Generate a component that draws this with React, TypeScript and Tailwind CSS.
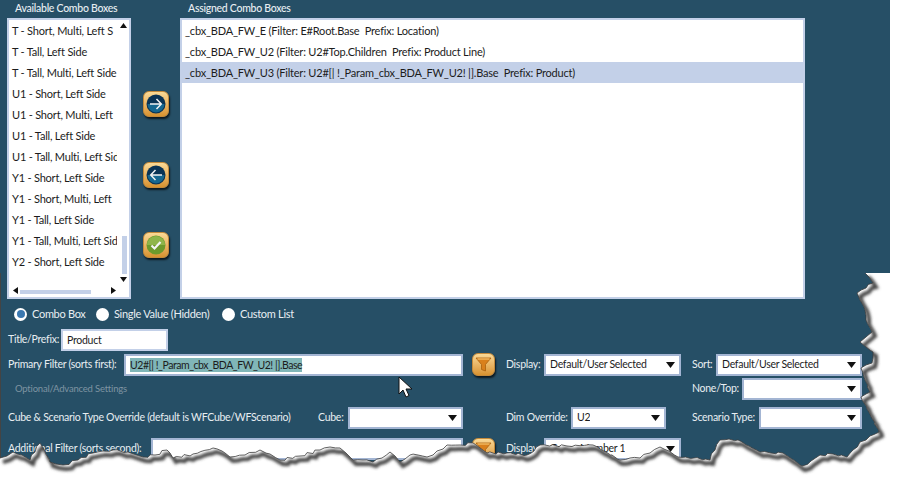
import React from "react";

const availableItems = [
  "T - Short, Multi, Left S",
  "T - Tall, Left Side",
  "T - Tall, Multi, Left Side",
  "U1 - Short, Left Side",
  "U1 - Short, Multi, Left",
  "U1 - Tall, Left Side",
  "U1 - Tall, Multi, Left Side",
  "Y1 - Short, Left Side",
  "Y1 - Short, Multi, Left",
  "Y1 - Tall, Left Side",
  "Y1 - Tall, Multi, Left Side",
  "Y2 - Short, Left Side",
];

const assignedItems = [
  "_cbx_BDA_FW_E (Filter: E#Root.Base  Prefix: Location)",
  "_cbx_BDA_FW_U2 (Filter: U2#Top.Children  Prefix: Product Line)",
  "_cbx_BDA_FW_U3 (Filter: U2#[| !_Param_cbx_BDA_FW_U2! |].Base  Prefix: Product)",
];

// torn paper edge, traced from the right side round to the bottom left
const tornTrace = "865,273 869,277 873,283 866,288 857,293 860,300 865,310 866,320 872,332 866,337 860,342 866,347 873,352 873,358 872,363 866,365 861,368 865,380 870,392 866,394 861,397 870,414 879,432 870,436 860,442 853,450 847,457 833,454 820,455 811,461 802,466 792,459 783,453 771,453 760,452 749,446 738,440 729,439 720,440 715,450 710,460 694,458 678,457 669,451 660,447 650,453 640,458 630,458 620,460 606,452 593,445 567,446 540,445 534,451 527,455 507,453 487,453 480,448 473,443 460,445 447,445 437,451 427,457 418,455 410,455 405,459 400,462 395,456 390,452 382,458 373,462 363,460 353,460 346,453 340,448 330,447 320,450 300,456 280,460 270,454 260,450 245,455 230,457 222,451 213,448 193,454 173,458 170,453 167,450 155,455 143,457 128,452 113,450 103,451 93,453 78,460 63,465 56,464 50,462 45,451 40,443 35,452 30,460 22,455 13,452 7,456 0,458";

// break the long segments up with a small fixed wobble so the edge reads as rough paper
function roughen(trace: string) {
  const pts = trace.split(" ").map((p) => p.split(",").map(Number));
  const out: string[] = [];
  pts.forEach(([x, y], i) => {
    out.push(`${x},${y}`);
    const next = pts[i + 1];
    if (!next) return;
    const steps = Math.floor(Math.hypot(next[0] - x, next[1] - y) / 4);
    for (let s = 1; s < steps; s++) {
      const t = s / steps;
      const w = Math.sin(i * 7.3 + s * 2.9) * 1.1;
      out.push(`${(x + (next[0] - x) * t + w).toFixed(1)},${(y + (next[1] - y) * t + w).toFixed(1)}`);
    }
  });
  return out;
}

const tornList = roughen(tornTrace);
const tornPoints = tornList.join(" ");
const outsidePoints = `890,273 904,273 904,487 0,487 ${[...tornList].reverse().join(" ")}`;

function Select({ value, className }: { value?: string; className: string }) {
  return (
    <div
      className={`h-[22px] bg-white border-2 border-[#a3b5d3] flex items-center justify-between pl-[4px] pr-[4px] text-[#1c1c1c] ${className}`}
    >
      <span className="overflow-hidden">{value}</span>
      <svg width="9" height="6" viewBox="0 0 9 6" className="shrink-0">
        <path d="M0 0h9L4.500 6z" fill="#111" />
      </svg>
    </div>
  );
}

function OrangeButton({ children, className }: { children: React.ReactNode; className: string }) {
  return (
    <div
      className={`rounded-[6px] bg-gradient-to-b from-[#fad995] to-[#d8932f] border border-[#c58a3a] shadow-[1px_2px_2px_rgba(0,0,0,0.7)] flex items-center justify-center ${className}`}
    >
      {children}
    </div>
  );
}

function ArrowButton({ dir, className }: { dir: "right" | "left"; className: string }) {
  return (
    <OrangeButton className={className}>
      <svg width="20" height="20" viewBox="0 0 20 20">
        <circle cx="10" cy="10" r="9.500" fill="#0a3354" />
        <path d="M1.500 10a8.500 8.500 0 0 0 17 0z" fill="#15668f" />
        {dir === "right" ? (
          <path d="M4 10h11M10.500 5l4.800 5-4.800 5" fill="none" stroke="#f2f2f2" strokeWidth="1.500" />
        ) : (
          <path d="M16 10H5M9.500 5L4.700 10l4.800 5" fill="none" stroke="#f2f2f2" strokeWidth="1.500" />
        )}
      </svg>
    </OrangeButton>
  );
}

function FilterButton() {
  return (
    <OrangeButton className="w-[23px] h-[23px] ml-[9px]">
      <svg width="17" height="17" viewBox="0 0 17 17">
        <path d="M1 2h15l-5.500 6.500V15l-4-1.500V8.500z" fill="#d9801c" stroke="#a8610f" strokeWidth="0.800" />
        <path d="M2.500 3h12" stroke="#f6c56f" strokeWidth="1.200" />
      </svg>
    </OrangeButton>
  );
}

function Radio({ label, checked, className }: { label: string; checked?: boolean; className?: string }) {
  return (
    <div className={`flex items-center gap-[5px] ${className ?? ""}`}>
      <div className="w-[13px] h-[13px] shrink-0 rounded-full bg-white flex items-center justify-center">
        {checked && <div className="w-[8px] h-[8px] rounded-full bg-[#3a78b0]" />}
      </div>
      <span>{label}</span>
    </div>
  );
}

export default function App() {
  return (
    <div className="relative w-[904px] h-[487px] bg-white overflow-hidden whitespace-nowrap font-['Lato',sans-serif] text-[10.5px] tracking-[-0.27px] text-[#e8eef2]">
      <div className="w-[890px] h-[487px] bg-[#264f66]">
        {/* list section */}
        <div className="flex pl-[7px] h-[299px]">
          <div className="w-[124px] shrink-0">
            <div className="h-[18px] pl-[8px] leading-[17px] font-medium">Available Combo Boxes</div>
            <div className="relative h-[281px] bg-white border-2 border-[#c3d0e8] overflow-hidden">
              {availableItems.map((item) => (
                <div key={item} className="h-[21px] w-[108px] pl-[3px] leading-[21px] text-[#1c1c1c] overflow-hidden text-[11px] tracking-[-0.2px]">
                  {item}
                </div>
              ))}
              {/* scrollbars */}
              <div className="absolute right-[2px] top-[216px] w-[5px] h-[38px] bg-[#c3d0e8]" />
              <div className="absolute left-[11px] bottom-[3px] w-[71px] h-[4px] bg-[#c3d0e8]" />
              <svg className="absolute right-[2px] top-[3px]" width="7" height="5" viewBox="0 0 7 5"><path d="M0 5h7L3.500 0z" fill="#111" /></svg>
              <svg className="absolute right-[2px] top-[257px]" width="7" height="5" viewBox="0 0 7 5"><path d="M0 0h7L3.500 5z" fill="#111" /></svg>
              <svg className="absolute left-[4px] bottom-[3px]" width="5" height="7" viewBox="0 0 5 7"><path d="M5 0v7L0 3.500z" fill="#111" /></svg>
              <svg className="absolute left-[102px] bottom-[3px]" width="5" height="7" viewBox="0 0 5 7"><path d="M0 0v7L5 3.500z" fill="#111" /></svg>
            </div>
          </div>
          <div className="w-[49px] shrink-0 flex flex-col items-center pl-[1px] pt-[91px]">
            <ArrowButton dir="right" className="w-[26px] h-[26px]" />
            <ArrowButton dir="left" className="w-[26px] h-[26px] mt-[45px]" />
            <OrangeButton className="w-[26px] h-[26px] mt-[44px]">
              <svg width="20" height="20" viewBox="0 0 20 20">
                <circle cx="10" cy="10" r="9.500" fill="#6d9a2c" />
                <path d="M1 10a9 9 0 0 1 18 0z" fill="#8fb54a" />
                <path d="M5.500 10.500l3 3 6-6.500" fill="none" stroke="#f4f4f4" strokeWidth="2.200" />
              </svg>
            </OrangeButton>
          </div>
          <div className="w-[625px] shrink-0">
            <div className="h-[18px] pl-[8px] leading-[17px] font-medium">Assigned Combo Boxes</div>
            <div className="h-[281px] bg-white border-2 border-[#c3d0e8] text-[#1c1c1c] text-[11px] tracking-[-0.2px]">
              {assignedItems.map((item, i) => (
                <div key={item} className={`h-[21px] pl-[3px] leading-[21px] whitespace-pre ${i === 2 ? "bg-[#c3d0e8]" : ""}`}>
                  {item}
                </div>
              ))}
            </div>
          </div>
        </div>

        {/* radio row */}
        <div className="flex items-center h-[30px] pl-[14px] text-[11px] tracking-[-0.3px]">
          <Radio label="Combo Box" checked className="w-[82px]" />
          <Radio label="Single Value (Hidden)" className="w-[126px]" />
          <Radio label="Custom List" />
        </div>

        {/* title row */}
        <div className="flex items-center h-[22px] pl-[8px]">
          <span className="w-[53px]">Title/Prefix:</span>
          <div className="w-[107px] h-[22px] bg-white border-2 border-[#c3d0e8] pl-[4px] leading-[19px] text-[#1c1c1c]">Product</div>
        </div>

        {/* primary filter row */}
        <div className="flex items-center h-[23px] mt-[2px] pl-[8px]">
          <span className="w-[116px]">Primary Filter (sorts first):</span>
          <div className="w-[339px] h-[22px] bg-white border-2 border-[#a3b5d3] pl-[4px] pt-[2px] text-[#1c1c1c] leading-[14px]">
            <span className="inline-block h-[14px] bg-[#80b6b8] whitespace-pre tracking-[-0.45px]">U2#[| !_Param_cbx_BDA_FW_U2! |].Base</span>
          </div>
          <FilterButton />
          <span className="w-[38px] ml-[11px]">Display:</span>
          <Select value="Default/User Selected" className="w-[137px]" />
          <span className="w-[24px] ml-[11px]">Sort:</span>
          <Select value="Default/User Selected" className="w-[146px]" />
        </div>

        {/* optional settings row */}
        <div className="flex items-center h-[22px] mt-[2px]">
          <span className="w-[692px] pl-[15px] text-[#7e94a2] text-[9.5px] tracking-[-0.2px]">Optional/Advanced Settings</span>
          <span className="w-[50px]">None/Top:</span>
          <Select className="w-[120px]" />
        </div>

        {/* override row */}
        <div className="flex items-center h-[22px] mt-[7px] pl-[8px]">
          <span className="w-[310px]">Cube &amp; Scenario Type Override (default is WFCube/WFScenario)</span>
          <span className="w-[30px]">Cube:</span>
          <Select className="w-[115px]" />
          <span className="w-[65px] ml-[43px]">Dim Override:</span>
          <Select value="U2" className="w-[95px]" />
          <span className="w-[67px] ml-[26px]">Scenario Type:</span>
          <Select className="w-[103px]" />
        </div>

        {/* additional filter row, mostly torn away */}
        <div className="flex items-center h-[22px] mt-[9px] pl-[8px]">
          <span className="w-[143px]">Additional Filter (sorts second):</span>
          <div className="w-[312px] h-[22px] bg-white border-2 border-[#a3b5d3]" />
          <FilterButton />
          <span className="w-[38px] ml-[11px]">Display:</span>
          <Select value="Group Member 1" className="w-[137px]" />
        </div>
      </div>

      {/* mouse pointer */}
      <svg className="absolute left-[398px] top-[376px]" width="16" height="22" viewBox="0 0 16 22">
        <path d="M1 1v17l4-4 3 7 3-1.500-3-6.500h6z" fill="#fff" stroke="#111" strokeWidth="1" />
      </svg>

      {/* torn edge */}
      <svg className="absolute inset-0" width="904" height="487" viewBox="0 0 904 487">
        <defs>
          <filter id="tornBlur" x="-5%" y="-5%" width="110%" height="110%">
            <feGaussianBlur stdDeviation="1.800" />
          </filter>
          <clipPath id="outside">
            <polygon points={outsidePoints} />
          </clipPath>
        </defs>
        <polygon points={outsidePoints} fill="#fff" />
        <g clipPath="url(#outside)">
          <polyline points={tornPoints} fill="none" stroke="#444" strokeWidth="4" filter="url(#tornBlur)" transform="translate(3 4)" />
        </g>
        <polyline points={tornPoints} fill="none" stroke="#3a3a3a" strokeWidth="0.800" />
        <line x1="0.500" y1="273" x2="0.500" y2="458" stroke="#444" strokeWidth="1" />
      </svg>
    </div>
  );
}
